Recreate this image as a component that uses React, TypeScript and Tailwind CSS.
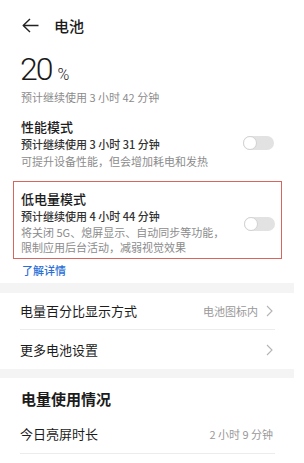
function Toggle() {
  return (
    <div className="flex h-[14px] w-[31px] shrink-0 items-center rounded-full bg-[#e2e2e2]">
      <div className="h-[14px] w-[14px] rounded-full border border-[#d2d2d2] bg-white" />
    </div>
  );
}

function Chevron() {
  return (
    <svg width="7" height="12" viewBox="0 0 7 12" fill="none" className="ml-[8px]">
      <path d="M1 1 L6 6 L1 11" stroke="#b4b4b4" strokeWidth="1.1" />
    </svg>
  );
}

export default function App() {
  return (
    <div className="h-[463px] w-[304px] overflow-hidden bg-white font-['Noto_Sans_CJK_SC',sans-serif] text-[#1c1c1c]">
      <div className="w-[294px]">
        {/* header */}
        <div className="flex h-[51px] items-center pl-[22px]">
          <svg width="17" height="15" viewBox="0 0 17 15" fill="none">
            <path d="M8 1 L1.2 7.5 L8 14 M1.2 7.5 H16.5" stroke="#222" strokeWidth="1.4" strokeLinejoin="round" />
          </svg>
          <span className="ml-[15px] text-[15px] font-medium leading-none">电池</span>
        </div>

        {/* level */}
        <div className="flex h-[38px] items-baseline pl-[20px] leading-[36px]">
          <span className="font-['Roboto',sans-serif] text-[32px] font-light tracking-[-2px] text-[#1a1a1a]">20</span>
          <span className="ml-[6px] font-['Roboto',sans-serif] text-[16px] font-light">%</span>
        </div>
        <div className="h-[16px] pl-[21px] text-[11px] leading-[16px] text-[#8c8c8c]">
          预计继续使用 3 小时 42 分钟
        </div>

        {/* performance mode */}
        <div className="mt-[13px] flex items-center pl-[21px] pr-[20px]">
          <div className="flex-1">
            <div className="h-[18px] text-[13px] font-medium leading-[18px]">性能模式</div>
            <div className="h-[17px] text-[11px] font-medium leading-[17px] text-[#333]">预计继续使用 3 小时 31 分钟</div>
            <div className="h-[17px] text-[11px] leading-[17px] text-[#8c8c8c]">可提升设备性能，但会增加耗电和发热</div>
          </div>
          <div className="mb-[3px]">
            <Toggle />
          </div>
        </div>

        {/* low power mode */}
        <div className="ml-[13px] mt-[11px] flex w-[269px] items-center border border-[#d9655f] pb-[3px] pl-[7px] pr-[6px] pt-[8px]">
          <div className="flex-1">
            <div className="h-[18px] text-[13px] font-medium leading-[18px]">低电量模式</div>
            <div className="h-[17px] text-[11px] font-medium leading-[17px] text-[#333]">预计继续使用 4 小时 44 分钟</div>
            <div className="text-[11px] leading-[15px] text-[#8c8c8c]">
              <div>将关闭 5G、熄屏显示、自动同步等功能，</div>
              <div>限制应用后台活动，减弱视觉效果</div>
            </div>
          </div>
          <div className="mt-[2px]">
            <Toggle />
          </div>
        </div>
        <div className="mt-[3px] h-[17px] pl-[22px] text-[11px] font-medium leading-[17px] text-[#2a6fd6]">了解详情</div>

        <div className="mt-[4px] h-[10px] bg-[#f4f4f4]" />

        {/* settings */}
        <div className="flex h-[36px] items-center pl-[20px] pr-[21px]">
          <span className="flex-1 text-[13px]">电量百分比显示方式</span>
          <span className="text-[11px] text-[#999]">电池图标内</span>
          <Chevron />
        </div>
        <div className="ml-[20px] mr-[19px] h-px bg-[#ececec]" />
        <div className="flex h-[39px] items-center pl-[20px] pr-[21px]">
          <span className="flex-1 text-[13px]">更多电池设置</span>
          <Chevron />
        </div>

        <div className="h-[9px] bg-[#f4f4f4]" />

        {/* usage */}
        <div className="flex h-[42px] items-center pl-[21px] text-[15px] font-bold">电量使用情况</div>
        <div className="flex h-[28px] items-center pl-[20px] pr-[21px]">
          <span className="flex-1 text-[13px]">今日亮屏时长</span>
          <span className="text-[11px] text-[#999]">2 小时 9 分钟</span>
        </div>
        <div className="ml-[20px] mr-[19px] mt-[5px] h-px bg-[#ececec]" />
      </div>
    </div>
  );
}
